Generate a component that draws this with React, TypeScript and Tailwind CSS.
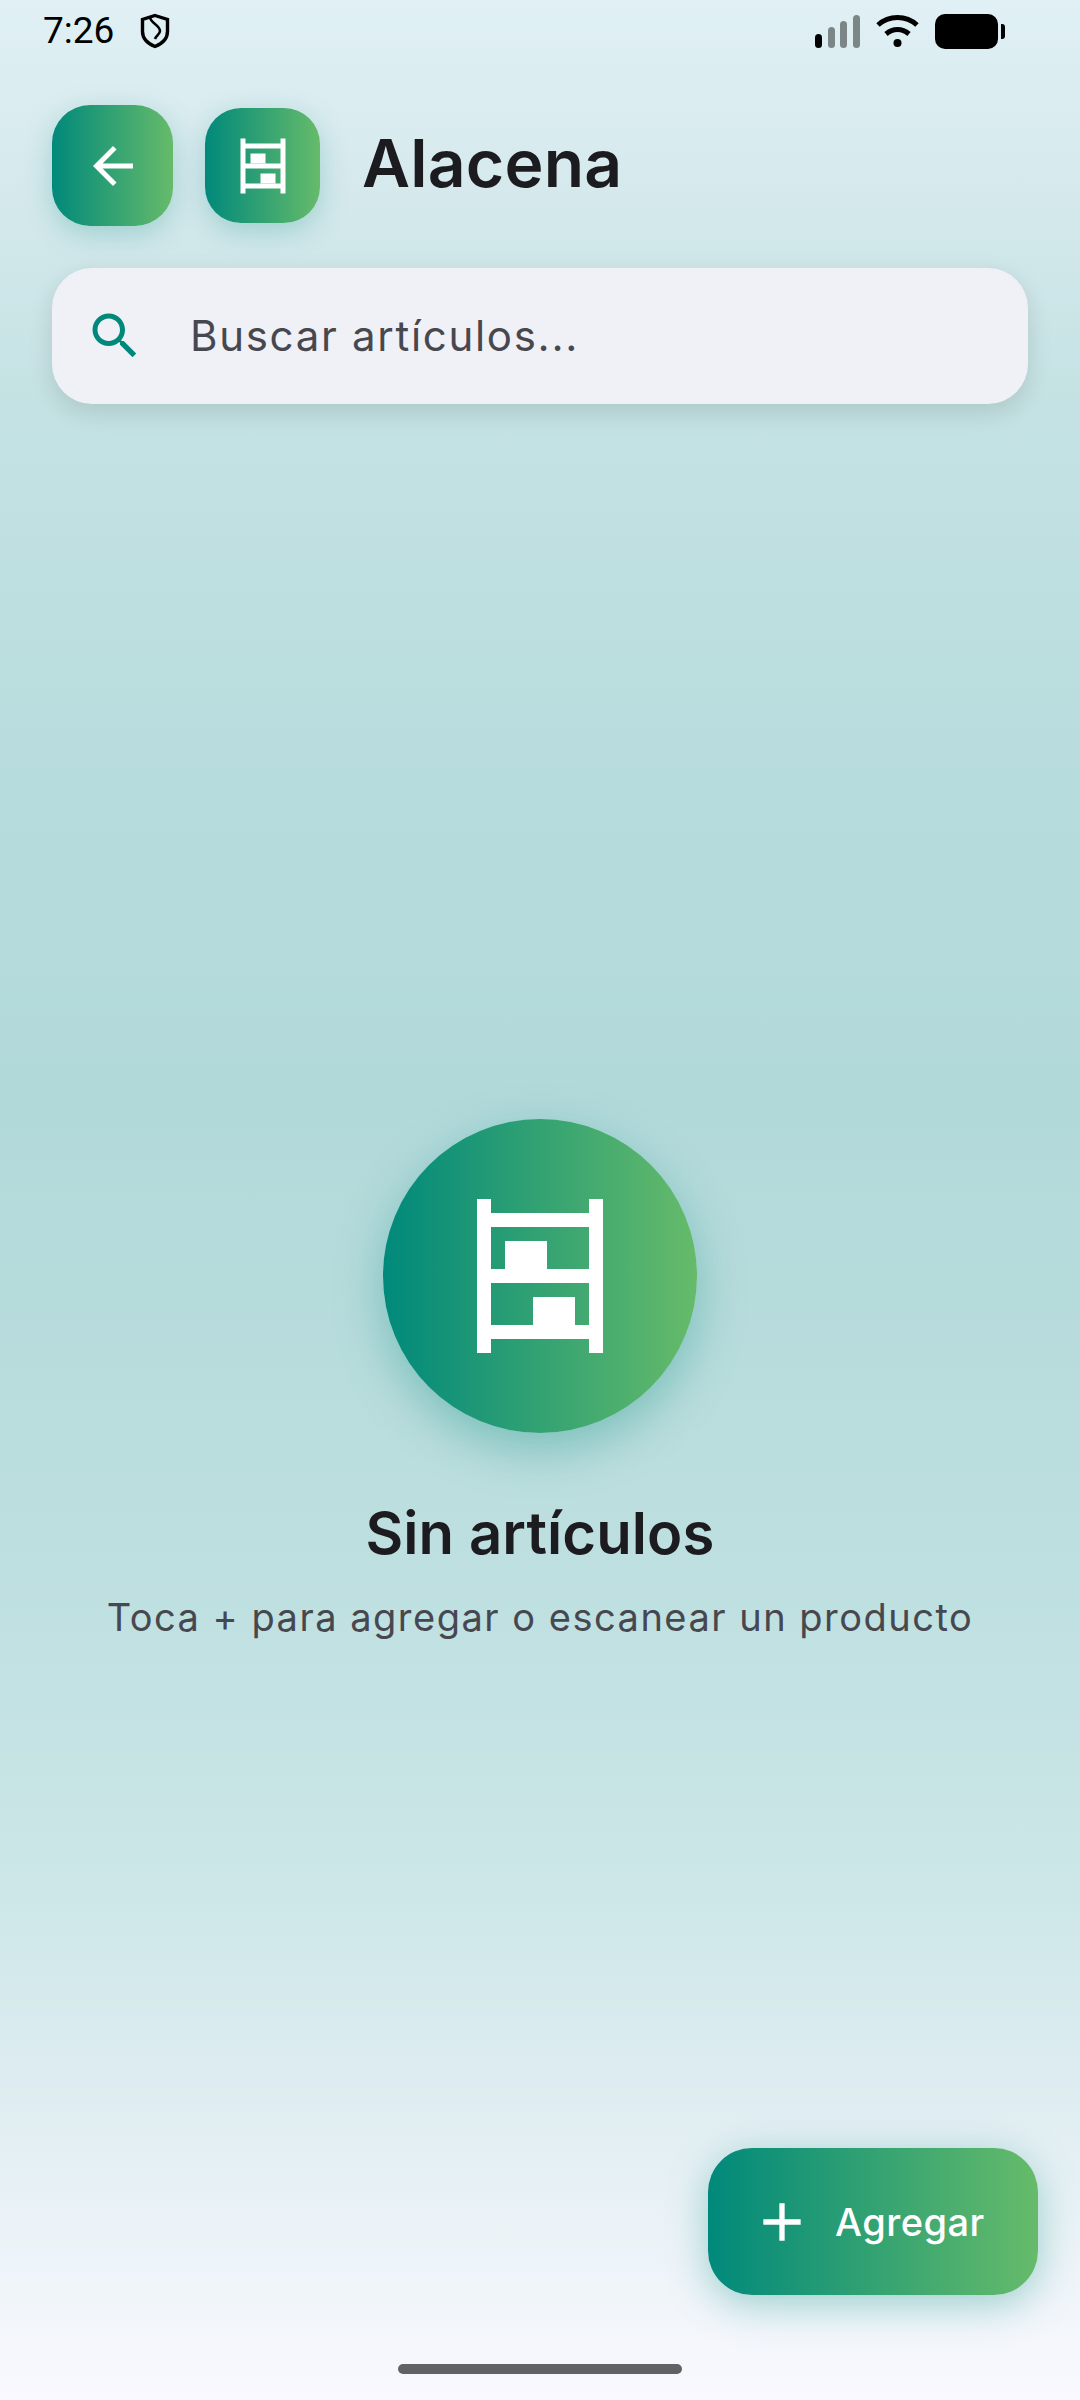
const Shelf = ({ size }: { size: number }) => (
  <svg width={size} height={size} viewBox="0 0 24 24" fill="#fff">
    <path fillRule="evenodd" d="M19 1v2H5V1H3v22h2v-2h14v2h2V1h-2zM19 19H5v-6h14v6zM19 11H5V5h14v6z" />
    <path d="M7 7h6v4H7zM11 15h6v4h-6z" />
  </svg>
);

const StatusBar = () => (
  <div className="flex h-[62px] items-center justify-between pl-[43px] pr-[75px]">
    <div className="flex items-center gap-[26px]">
      <span className="text-[37px] leading-[36px] text-black font-['Roboto',sans-serif]">7:26</span>
      <svg width="30" height="36" viewBox="0 0 30 36" fill="none" stroke="#000" strokeWidth="3.4">
        <path d="M15 2.5 27.5 6.5v12c0 7-5 12-12.500 15C7.500 30.500 2.500 25.500 2.500 18.500v-12z" />
        <path d="M10 4c0 6 10 8 10 14 0 3-4 5-5 8" strokeWidth="2.600" />
      </svg>
    </div>
    <div className="flex items-center">
      <svg width="45" height="33" viewBox="0 0 45 33" className="mr-[16px]">
        <rect x="0" y="19" width="7" height="14" rx="3.500" fill="#000" />
        <rect x="13" y="12" width="7" height="21" rx="3.500" fill="#7c8687" />
        <rect x="25" y="6" width="7" height="27" rx="3.500" fill="#7c8687" />
        <rect x="38" y="0" width="7" height="33" rx="3.500" fill="#7c8687" />
      </svg>
      <svg width="43" height="33" viewBox="0 0 43 33" fill="none" stroke="#000" strokeWidth="5" className="mr-[16px]">
        <path d="M2 10C13 0 30 0 41 10" />
        <path d="M10 19c7-6 16-6 23 0" />
        <circle cx="21.500" cy="28" r="4" fill="#000" stroke="none" />
      </svg>
      <svg width="70" height="35" viewBox="0 0 70 35">
        <rect x="0" y="0" width="63" height="35" rx="10" fill="#000" />
        <path d="M66 10h1a3 3 0 0 1 3 3v9a3 3 0 0 1-3 3h-1z" fill="#000" />
      </svg>
    </div>
  </div>
);

export default function App() {
  return (
    <div className="relative flex h-[2400px] w-[1080px] flex-col overflow-hidden bg-[linear-gradient(180deg,#e0f0f4_0%,#d7eaee_7%,#c4e2e3_17%,#b7dcdd_33%,#b2d9da_46%,#badddd_60%,#c1e1e2_69%,#cde7e8_79%,#dfedf1_87.5%,#e9f2f6_92%,#f9f9ff_100%)] font-['Inter',sans-serif]">
      <StatusBar />
      <div className="flex items-center pl-[52px] pt-[43px]">
        <button className="flex h-[121px] w-[121px] items-center justify-center rounded-[38px] bg-[linear-gradient(90deg,#00897b,#66bb6a)] shadow-[0_8px_28px_rgba(0,137,123,0.25)]">
          <svg width="60" height="60" viewBox="0 0 24 24" fill="#fff">
            <path d="M20 11H7.830l5.590-5.590L12 4l-8 8 8 8 1.410-1.410L7.830 13H20v-2z" />
          </svg>
        </button>
        <div className="ml-[32px] flex h-[115px] w-[115px] items-center justify-center rounded-[36px] bg-[linear-gradient(90deg,#00897b,#66bb6a)] shadow-[0_8px_28px_rgba(0,137,123,0.25)]">
          <Shelf size={60} />
        </div>
        <h1 className="ml-[42px] pb-[5px] text-[66px] font-semibold leading-[76px] tracking-[0.2px] text-[#1c1b1f]">Alacena</h1>
      </div>
      <div className="mx-[52px] mt-[42px] flex h-[136px] items-center rounded-[40px] bg-[#f0f0f7] shadow-[0_8px_24px_rgba(0,0,0,0.12)] pl-[33px]">
        <svg width="60" height="60" viewBox="0 0 24 24" fill="#00897b">
          <path d="M15.500 14h-.790l-.280-.270C15.410 12.590 16 11.110 16 9.500 16 5.910 13.090 3 9.500 3S3 5.910 3 9.500 5.910 16 9.500 16c1.610 0 3.090-.590 4.230-1.570l.270.280v.790l5 4.990L20.490 19l-4.990-5zm-6 0C7.010 14 5 11.990 5 9.500S7.010 5 9.500 5 14 7.010 14 9.500 11.990 14 9.500 14z" />
        </svg>
        <span className="ml-[45px] text-[42px] leading-[48px] tracking-[1.700px] text-[#47484f]">Buscar artículos...</span>
      </div>
      <div className="flex flex-col items-center pt-[715px]">
        <div className="flex h-[314px] w-[314px] items-center justify-center rounded-full bg-[linear-gradient(90deg,#00897b,#66bb6a)] shadow-[0_16px_48px_rgba(0,137,123,0.35)]">
          <Shelf size={168} />
        </div>
        <h2 className="mt-[65px] text-[58px] font-semibold leading-[70px] tracking-[0.1px] text-[#1c1b1f]">Sin artículos</h2>
        <p className="mt-[25px] text-[38px] leading-[48px] tracking-[1.500px] text-[#47484f]">Toca + para agregar o escanear un producto</p>
      </div>
      <button className="absolute left-[708px] top-[2148px] flex h-[147px] w-[330px] items-center rounded-[44px] bg-[linear-gradient(90deg,#00897b,#66bb6a)] pl-[42px] shadow-[0_10px_40px_rgba(0,137,123,0.35)]">
        <svg width="64" height="64" viewBox="0 0 24 24" fill="#fff">
          <path d="M19 13h-6v6h-2v-6H5v-2h6V5h2v6h6v2z" />
        </svg>
        <span className="ml-[21px] text-[38px] font-medium leading-[44px] tracking-[0.5px] text-white">Agregar</span>
      </button>
      <div className="absolute bottom-[26px] left-[398px] h-[10px] w-[284px] rounded-full bg-[#626265]" />
    </div>
  );
}
